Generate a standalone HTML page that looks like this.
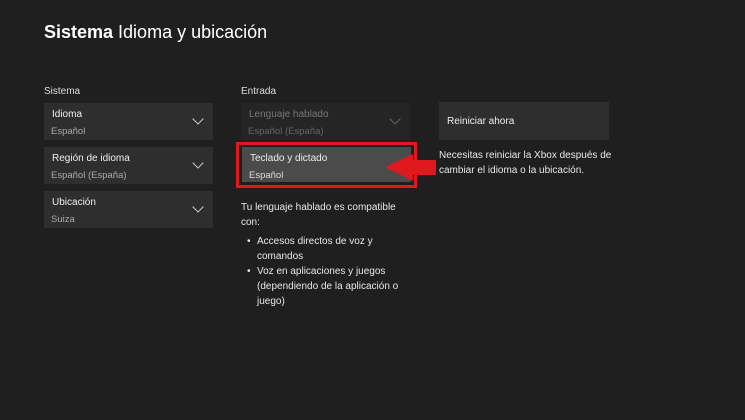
<!DOCTYPE html>
<html><head><meta charset="utf-8"><style>
body{margin:0;width:745px;height:420px;background:#1f1f1f;font-family:"Liberation Sans",sans-serif;color:#e8e8e8;position:relative;overflow:hidden}
.a{position:absolute}
h1{position:absolute;left:44px;top:22px;margin:0;font-size:18px;font-weight:normal;color:#fff}
h1 b{font-weight:bold}
.lbl{font-size:10px;color:#ddd}
.card{position:absolute;width:169px;height:37px;background:#2e2e2e}
.card .t{position:absolute;left:8px;top:6px;font-size:10px;color:#eee}
.card .s{position:absolute;left:7px;top:23px;font-size:9.5px;color:#aaa}
.chev{position:absolute;right:11px;top:12px;width:7px;height:7px;border-right:1.3px solid #ccc;border-bottom:1.3px solid #ccc;transform:rotate(45deg)}
.txt{font-size:10px;line-height:15px;color:#e8e8e8}
</style></head><body>
<h1><b>Sistema</b> Idioma y ubicación</h1>
<div class="a lbl" style="left:44px;top:86px">Sistema</div>
<div class="a lbl" style="left:241px;top:86px">Entrada</div>
<div class="card" style="left:44px;top:103px"><div class="t">Idioma</div><div class="s">Español</div><div class="chev"></div></div>
<div class="card" style="left:44px;top:147px"><div class="t">Región de idioma</div><div class="s">Español (España)</div><div class="chev"></div></div>
<div class="card" style="left:44px;top:191px"><div class="t">Ubicación</div><div class="s">Suiza</div><div class="chev"></div></div>
<div class="card" style="left:241px;top:103px;background:#252525"><div class="t" style="color:#777">Lenguaje hablado</div><div class="s" style="color:#666">Español (España)</div><div class="chev" style="border-color:#666"></div></div>
<div class="a" style="left:236px;top:142px;width:175px;height:40px;border:3px solid #e0191e;"></div>
<div class="card" style="left:242px;top:147px;width:169px;height:35px;background:#4b4b4b"><div class="t">Teclado y dictado</div><div class="s" style="color:#ddd">Español</div></div>
<svg class="a" style="left:380px;top:150px" width="60" height="36"><polygon points="5,17 33,4 33,10 56,10 56,25 33,25 33,31" fill="#e0191e"/></svg>
<div class="card" style="left:439px;top:102px;width:170px;height:38px"><div class="t" style="top:14px">Reiniciar ahora</div></div>
<div class="a txt" style="left:439px;top:148px;width:190px">Necesitas reiniciar la Xbox después de cambiar el idioma o la ubicación.</div>
<div class="a txt" style="left:241px;top:200px;width:160px">Tu lenguaje hablado es compatible con:</div>
<div class="a txt" style="left:247px;top:234px">•</div>
<div class="a txt" style="left:257px;top:234px;width:130px">Accesos directos de voz y comandos</div>
<div class="a txt" style="left:247px;top:264px">•</div>
<div class="a txt" style="left:257px;top:264px;width:150px">Voz en aplicaciones y juegos (dependiendo de la aplicación o juego)</div>
</body></html>
